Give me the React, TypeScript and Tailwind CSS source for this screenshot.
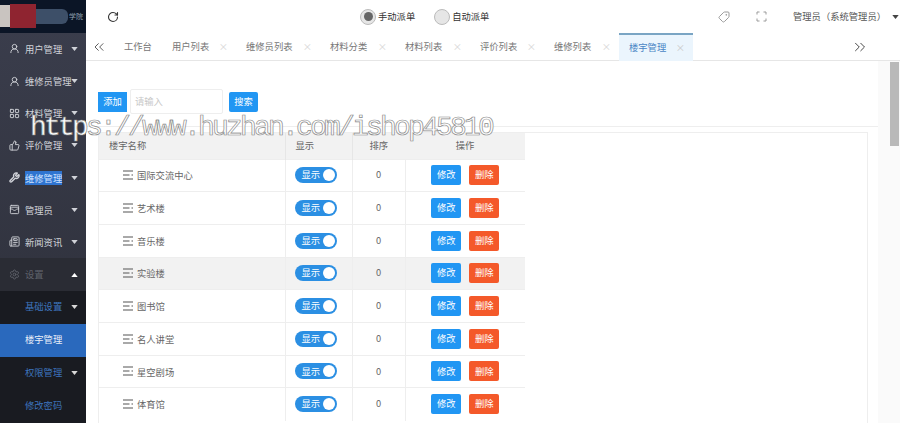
import { ChevronsLeft, ChevronsRight, LayoutGrid, Newspaper, RotateCw, Settings, Tag, ThumbsUp, UserRound, Wrench, WalletCards } from "lucide-react";
import type { ReactNode } from "react";

const buildings = ["国际交流中心", "艺术楼", "音乐楼", "实验楼", "图书馆", "名人讲堂", "星空剧场", "体育馆"];

const menu = [
  { label: "用户管理", icon: <UserRound size={11} /> },
  { label: "维修员管理", icon: <UserRound size={11} /> },
  { label: "材料管理", icon: <LayoutGrid size={11} /> },
  { label: "评价管理", icon: <ThumbsUp size={11} /> },
  { label: "维修管理", icon: <Wrench size={11} strokeWidth={3} />, selected: true },
  { label: "管理员", icon: <WalletCards size={11} /> },
  { label: "新闻资讯", icon: <Newspaper size={11} /> },
];

const tabs = [
  { label: "用户列表", w: "w-[74px]" },
  { label: "维修员列表", w: "w-[84px]" },
  { label: "材料分类", w: "w-[75px]" },
  { label: "材料列表", w: "w-[75px]" },
  { label: "评价列表", w: "w-[74px]" },
  { label: "维修列表", w: "w-[75px]" },
];

function Caret({ up }: { up?: boolean }) {
  return (
    <svg width="7" height="4" viewBox="0 0 8 5" className="shrink-0">
      <path d={up ? "M0 5 L4 0 L8 5 Z" : "M0 0 L8 0 L4 5 Z"} fill="currentColor" />
    </svg>
  );
}

function MenuRow({ icon, label, selected }: { icon: ReactNode; label: string; selected?: boolean }) {
  return (
    <div className="h-[32.3px] flex items-center pl-[9px] pr-[8px] text-[#d0d2d8]">
      <span className="w-[16px] shrink-0">{icon}</span>
      <span className="flex-1 min-w-0 whitespace-nowrap leading-[12px]">
        {selected ? <span className="bg-[#2f74d0] text-[#cfe3ff]">{label}</span> : label}
      </span>
      <Caret />
    </div>
  );
}

function SubRow({ label, active, arrow }: { label: string; active?: boolean; arrow?: boolean }) {
  return (
    <div className={`h-[33px] flex items-center pl-[25px] pr-[8px] ${active ? "bg-[#2a69bd] text-[#e8eef8]" : "text-[#3d74bd]"}`}>
      <span className="flex-1">{label}</span>
      {arrow && <span className="text-[#d8d8d8]"><Caret /></span>}
    </div>
  );
}

function Radio({ checked, label }: { checked?: boolean; label: string }) {
  return (
    <div className="flex items-center gap-[2px] whitespace-nowrap">
      <span className="w-[16px] h-[16px] shrink-0 rounded-full border border-[#bbb] bg-[#e6e6e6] flex items-center justify-center">
        {checked && <span className="w-[9px] h-[9px] rounded-full bg-[#666]" />}
      </span>
      <span>{label}</span>
    </div>
  );
}

function RowIcon() {
  return (
    <svg width="11" height="10" viewBox="0 0 11 10" className="shrink-0 text-[#555]">
      <path d="M0 1 H10 M0 5 H6.5 M8.5 5 H10 M0 9 H10" stroke="currentColor" strokeWidth="1.2" />
    </svg>
  );
}

export default function App() {
  return (
    <div className="h-[423px] w-[900px] overflow-hidden flex relative bg-white text-[9.3px] font-['Noto_Sans_CJK_SC','Noto_Sans',sans-serif]">
      <aside className="w-[86px] shrink-0 flex flex-col bg-gradient-to-b from-[#3b3e4d] to-[#2c2e38]">
        <div className="h-[33px] bg-[#0b1526] flex items-center overflow-hidden whitespace-nowrap">
          <span className="w-[10px] h-[22px] shrink-0 bg-[#c9c4c0]" />
          <span className="w-[26px] h-[24px] shrink-0 bg-[#8f2430]" />
          <span className="w-[32px] h-[15px] shrink-0 bg-[#3d4f68] rounded-r-md" />
          <span className="ml-[1px] text-[7px] text-[#8fa0b0]">学院</span>
        </div>
        {menu.map((m) => (
          <MenuRow key={m.label} icon={m.icon} label={m.label} selected={m.selected} />
        ))}
        <div className="h-[33px] flex items-center pl-[9px] pr-[8px] bg-[#2a2c34] text-[#5f626b]">
          <span className="w-[16px] shrink-0"><Settings size={11} /></span>
          <span className="flex-1">设置</span>
          <span className="text-white"><Caret up /></span>
        </div>
        <div className="flex-1 bg-[#191b21]">
          <SubRow label="基础设置" arrow />
          <SubRow label="楼宇管理" active />
          <SubRow label="权限管理" arrow />
          <SubRow label="修改密码" />
        </div>
      </aside>

      <div className="flex-1 min-w-0 flex flex-col">
        <header className="h-[33px] shrink-0 flex items-center text-[#444]">
          <RotateCw size={12} className="ml-[21px] shrink-0 text-[#333]" strokeWidth={2.2} />
          <div className="ml-[241px] w-[128px] shrink-0 flex gap-[19px] text-[#333]">
            <Radio checked label="手动派单" />
            <Radio label="自动派单" />
          </div>
          <Tag size={12} className="ml-[230px] shrink-0 text-[#999] rotate-[90deg]" />
          <svg width="11" height="11" viewBox="0 0 11 11" className="ml-[26px] shrink-0 text-[#999]">
            <path d="M1 3.5 V1 H3.5 M7.5 1 H10 V3.5 M10 7.5 V10 H7.5 M3.5 10 H1 V7.5" fill="none" stroke="currentColor" />
          </svg>
          <span className="ml-[26px] whitespace-nowrap text-[#555]">管理员（系统管理员）</span>
          <span className="ml-[6px] text-[#444]"><Caret /></span>
        </header>

        <nav className="h-[28px] shrink-0 flex items-center border-b border-[#e6e6e6] text-[#777]">
          <ChevronsLeft size={18} strokeWidth={1.3} className="ml-[5px] w-[16px] shrink-0 text-[#444]" />
          <span className="ml-[17px] w-[38px] shrink-0">工作台</span>
          {tabs.map((t) => (
            <div key={t.label} className={`${t.w} h-full flex items-center justify-between pl-[10px] pr-[8px] shrink-0`}>
              <span>{t.label}</span>
              <span className="text-[#d8d8d8]">×</span>
            </div>
          ))}
          <div className="w-[74px] h-[28px] shrink-0 flex items-center justify-between pl-[10px] pr-[8px] border-t-2 border-[#7aa5c4] bg-[#ebf5fd] text-[#4a86c5]">
            <span>楼宇管理</span>
            <span className="text-[#ccc]">×</span>
          </div>
          <ChevronsRight size={18} strokeWidth={1.3} className="ml-[158px] shrink-0 text-[#444]" />
        </nav>

        <main className="flex-1 min-h-0 flex overflow-hidden">
          <div className="flex-1 min-w-0">
            <div className="h-[49px] pl-[12px] flex items-center gap-[3px] mt-[16px]">
              <button className="w-[29px] h-[20px] bg-[#2196f3] text-white">添加</button>
              <div className="w-[93px] h-[25px] border border-[#eee] rounded-[2px] pl-[4px] flex items-center text-[#c8c8c8]">请输入</div>
              <button className="ml-[3px] w-[29px] h-[20px] rounded-[2px] bg-[#2196f3] text-white">搜索</button>
            </div>
            <div className="h-[1px] bg-[#eee]" />
            <div className="ml-[12px] mr-[10px] mt-[5px] border border-[#eee] border-b-0 h-[300px]">
              <table className="w-[426px] table-fixed border-collapse text-[#666]">
                <thead>
                  <tr className="h-[26px] bg-[#f2f2f2] text-[#666]">
                    <th className="w-[186px] font-normal text-left pl-[10px]">楼宇名称</th>
                    <th className="w-[67px] font-normal text-left pl-[10px] border-l border-[#e6e6e6]">显示</th>
                    <th className="w-[53px] font-normal border-l border-[#e6e6e6]">排序</th>
                    <th className="font-normal">操作</th>
                  </tr>
                </thead>
                <tbody>
                  {buildings.map((name) => (
                    <tr key={name} className={`h-[32.7px] border-t border-[#eee] ${name === "实验楼" ? "bg-[#f2f2f2]" : ""}`}>
                      <td className="pl-[24px]">
                        <div className="flex items-center gap-[3px]">
                          <RowIcon />
                          <span className="pt-[2px]">{name}</span>
                        </div>
                      </td>
                      <td className="pl-[9px] border-l border-[#eee]">
                        <div className="w-[42px] h-[16px] rounded-full bg-[#2b8fe3] flex items-center justify-between pl-[7px] pr-[2px] text-white">
                          <span>显示</span>
                          <span className="w-[12px] h-[12px] rounded-full bg-white" />
                        </div>
                      </td>
                      <td className="text-center border-l border-[#eee]">0</td>
                      <td className="border-l border-[#eee]">
                        <div className="flex justify-center gap-[8px] text-white">
                          <button className="w-[30px] h-[20px] rounded-[2px] bg-[#2196f3]">修改</button>
                          <button className="w-[30px] h-[20px] rounded-[2px] bg-[#f4592a]">删除</button>
                        </div>
                      </td>
                    </tr>
                  ))}
                </tbody>
              </table>
            </div>
          </div>
          <div className="w-[22px] shrink-0 bg-[#fafafa] flex justify-end">
            <div className="w-[9px] h-[84px] mt-[1px] mr-[1px] bg-[#b9b9b9]" />
          </div>
        </main>
      </div>

      {/* site stamp laid across the page */}
      <div className="absolute left-[30px] top-[110px] pointer-events-none whitespace-nowrap font-['Liberation_Mono',monospace] text-[28px] leading-[36px] tracking-[-2.8px] text-white [-webkit-text-stroke:0.7px_#8a8a8a]">
        https://www.huzhan.com/ishop45810
      </div>
    </div>
  );
}
